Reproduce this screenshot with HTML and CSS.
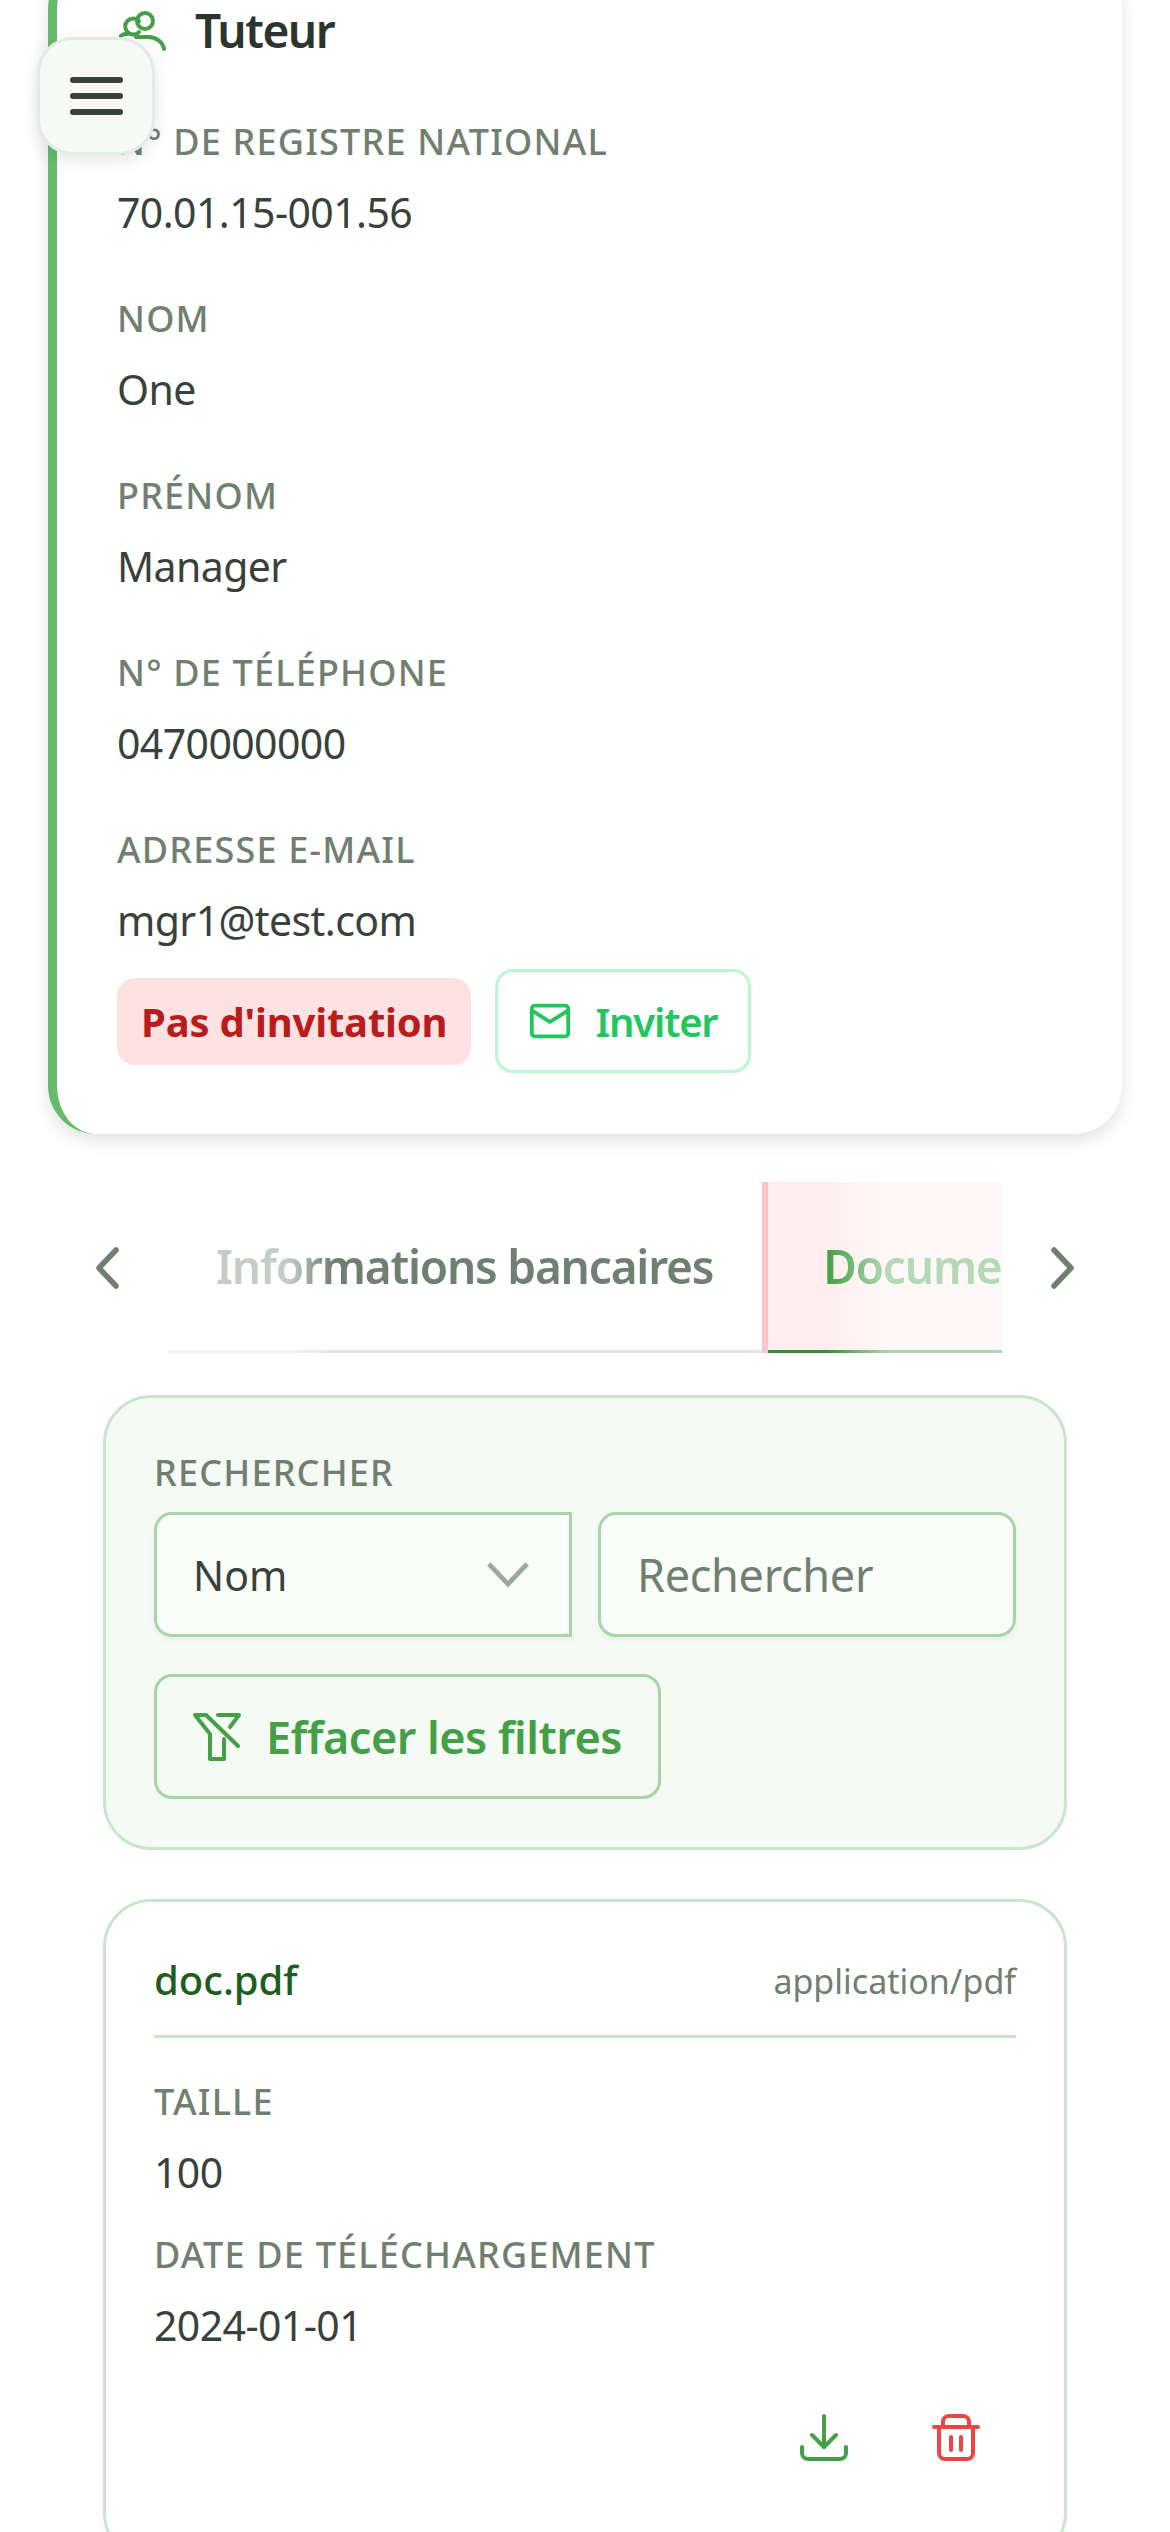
FILE: index.html
```html
<!DOCTYPE html>
<html>

<head>
    <title>Tuteur</title>
    <link rel="stylesheet" href="styles.css">
</head>

<body>
    <button class="menu-btn" aria-label="Menu">
        <span></span>
        <span></span>
        <span></span>
    </button>

    <section class="person-card">
        <div class="person-title">
            <svg class="person-icon" viewBox="0 0 48 48" fill="none" stroke="#43a047" stroke-width="4" stroke-linecap="round">
                <circle cx="26" cy="15" r="8" />
                <path d="M20 15a8 8 0 1 0 0 11" />
                <path d="M17 31h12a16 14 0 0 1 16 12" />
                <path d="M1 31a8 8 0 0 1 7-3" />
            </svg>
            <h2>Tuteur</h2>
        </div>

        <div class="field">
            <div class="label">N° de registre national</div>
            <div class="value">70.01.15-001.56</div>
        </div>
        <div class="field">
            <div class="label">Nom</div>
            <div class="value">One</div>
        </div>
        <div class="field">
            <div class="label">Prénom</div>
            <div class="value">Manager</div>
        </div>
        <div class="field">
            <div class="label">N° de téléphone</div>
            <div class="value">0470000000</div>
        </div>
        <div class="field">
            <div class="label">Adresse e-mail</div>
            <div class="value">mgr1@test.com</div>
        </div>

        <div class="invite-row">
            <span class="badge">Pas d'invitation</span>
            <button class="invite-btn">
                <svg viewBox="0 0 48 48" fill="none" stroke="#22c55e" stroke-width="4" stroke-linejoin="round" stroke-linecap="round">
                    <rect x="5" y="8" width="38" height="32" rx="3" />
                    <path d="M5 13l19 12 19-12" />
                </svg>
                Inviter
            </button>
        </div>
    </section>

    <nav class="tabs-row">
        <svg class="chevron" viewBox="0 0 25 42" fill="none" stroke="#6f8071" stroke-width="5.5" stroke-linecap="round" stroke-linejoin="round">
            <path d="M21 3L4 21l17 18" />
        </svg>
        <div class="tabs">
            <div class="tab">Informations bancaires</div>
            <div class="tab active">Documents</div>
        </div>
        <svg class="chevron" viewBox="0 0 25 42" fill="none" stroke="#6f8071" stroke-width="5.5" stroke-linecap="round" stroke-linejoin="round">
            <path d="M4 3l17 18L4 39" />
        </svg>
    </nav>

    <section class="filter-card">
        <div class="label">Rechercher</div>
        <div class="filter-grid">
            <div class="select">
                <span>Nom</span>
                <svg viewBox="0 0 44 28" fill="none" stroke="#9aa99d" stroke-width="5">
                    <path d="M2 3l20 21L42 3" />
                </svg>
            </div>
            <div class="search">Rechercher</div>
        </div>
        <button class="clear-btn">
            <svg viewBox="0 0 48 48" fill="none" stroke="#43a047" stroke-width="4" stroke-linecap="round" stroke-linejoin="round">
                <path d="M13 2H2l15 19v25h14V26" />
                <path d="M13 2l32 31" />
                <path d="M25 2h21l-9 12" />
            </svg>
            Effacer les filtres
        </button>
    </section>

    <section class="doc-card">
        <div class="doc-head">
            <span class="doc-name">doc.pdf</span>
            <span class="doc-type">application/pdf</span>
        </div>
        <div class="doc-field">
            <div class="label">Taille</div>
            <div class="value">100</div>
        </div>
        <div class="doc-field">
            <div class="label">Date de téléchargement</div>
            <div class="value">2024-01-01</div>
        </div>
        <div class="doc-actions">
            <button class="icon-btn" aria-label="Télécharger">
                <svg viewBox="0 0 48 48" fill="none" stroke="#43a047" stroke-width="4" stroke-linecap="round" stroke-linejoin="round">
                    <path d="M24 2v31" />
                    <path d="M12 21l12 12 12-12" />
                    <path d="M2 33v6a6 6 0 0 0 6 6h32a6 6 0 0 0 6-6v-6" />
                </svg>
            </button>
            <button class="icon-btn" aria-label="Supprimer">
                <svg viewBox="0 0 48 48" fill="none" stroke="#ef4444" stroke-width="4" stroke-linecap="round" stroke-linejoin="round">
                    <path d="M2 13h44" />
                    <path d="M7 13v26a6 6 0 0 0 6 6h22a6 6 0 0 0 6-6V13" />
                    <path d="M11 13V8a6 6 0 0 1 6-6h14a6 6 0 0 1 6 6v5" />
                    <path d="M19 23v13" />
                    <path d="M29 23v13" />
                </svg>
            </button>
        </div>
    </section>
</body>

</html>
```

FILE: styles.css
```css
html,
body {
    margin: 0;
    height: 2532px;
    overflow: hidden;
}

body {
    position: relative;
    background-color: #fff;
    font-family: "Noto Sans", "Open Sans", sans-serif;
    color: #37423b;
}

button {
    font-family: inherit;
    background: none;
    cursor: pointer;
}

/* Floating menu button */
.menu-btn {
    position: absolute;
    top: 37px;
    left: 37px;
    z-index: 5;
    width: 118px;
    height: 118px;
    padding: 0;
    display: flex;
    flex-direction: column;
    align-items: center;
    justify-content: center;
    gap: 10px;
    background-color: #f6f9f6;
    border: 3px solid #e3ebe6;
    border-radius: 36px;
    box-shadow: 0 6px 18px rgba(0, 0, 0, 0.1);
}

.menu-btn span {
    width: 53px;
    height: 6px;
    border-radius: 3px;
    background-color: #37423b;
}

/* Person card */
.person-card {
    margin: -39px 48px 0 48px;
    padding: 0 48px 0 60px;
    height: 1173px;
    box-sizing: border-box;
    background-color: #fff;
    border-left: 9px solid #66bb6a;
    border-radius: 48px;
    box-shadow: 0 6px 18px rgba(0, 0, 0, 0.12);
}

.person-title {
    display: flex;
    align-items: center;
    gap: 28px;
    height: 72px;
    padding-top: 33px;
    margin-bottom: 49px;
}

.person-title h2 {
    margin: 0;
    font-size: 46px;
    font-weight: 600;
    color: #2b352e;
    letter-spacing: -1.5px;
}

.person-icon {
    width: 48px;
    height: 48px;
    margin-left: 2px;
}

.label {
    font-size: 36px;
    line-height: 54px;
    font-weight: 500;
    text-transform: uppercase;
    letter-spacing: 1.2px;
    color: #6f8071;
}

.value {
    margin-top: 12px;
    font-size: 41px;
    line-height: 63px;
    letter-spacing: -0.6px;
    color: #37423b;
}

.field {
    margin-bottom: 48px;
}

.invite-row {
    display: flex;
    align-items: center;
    gap: 24px;
    margin-top: -31px;
}

.badge {
    padding: 0 24px;
    height: 87px;
    display: flex;
    align-items: center;
    font-size: 40px;
    font-weight: 700;
    letter-spacing: -0.2px;
    color: #b91c1c;
    background-color: #fee2e2;
    border-radius: 18px;
}

.invite-btn {
    height: 104px;
    padding: 0 30px 0 29px;
    display: flex;
    align-items: center;
    gap: 22px;
    font-size: 40px;
    font-weight: 600;
    letter-spacing: -1.2px;
    color: #22c55e;
    border: 3px solid #bbf7d0;
    border-radius: 18px;
}

.invite-btn svg {
    width: 46px;
    height: 46px;
}

/* Tabs */
.tabs-row {
    display: flex;
    align-items: center;
    gap: 48px;
    margin-top: 48px;
    padding: 0 95px;
}

.chevron {
    width: 25px;
    height: 42px;
    flex-shrink: 0;
}

.tabs {
    flex: 1;
    min-width: 0;
    display: flex;
    overflow: hidden;
    -webkit-mask-image: linear-gradient(to right, rgba(0, 0, 0, 0.4) 0, rgba(0, 0, 0, 0.4) 120px, #000 165px, #000 calc(100% - 175px), rgba(0, 0, 0, 0.4) calc(100% - 115px), rgba(0, 0, 0, 0.4) 100%);
    mask-image: linear-gradient(to right, rgba(0, 0, 0, 0.4) 0, rgba(0, 0, 0, 0.4) 120px, #000 165px, #000 calc(100% - 175px), rgba(0, 0, 0, 0.4) calc(100% - 115px), rgba(0, 0, 0, 0.4) 100%);
}

.tab {
    flex-shrink: 0;
    height: 171px;
    box-sizing: border-box;
    display: flex;
    align-items: center;
    padding: 0 49px 3px 48px;
    font-size: 46px;
    font-weight: 600;
    letter-spacing: -1.2px;
    color: #6f8071;
    box-shadow: inset 0 -3px 0 #e0e7e4;
}

.tab.active {
    padding-left: 55px;
    color: #43a047;
    background-color: #feeeee;
    border-left: 6px solid #fec5c5;
    box-shadow: inset 0 -3px 0 #388e3c;
}

/* Filters */
.filter-card {
    margin: 42px 103px 0 103px;
    padding: 48px;
    background-color: #f5faf5;
    border: 3px solid #c8e6c9;
    border-radius: 48px;
}

.filter-grid {
    display: grid;
    grid-template-columns: 1fr 1fr;
    gap: 26px;
    margin-top: 12px;
}

.select,
.search {
    height: 125px;
    box-sizing: border-box;
    display: flex;
    align-items: center;
    padding: 0 36px;
    font-size: 41px;
    background-color: #fbfdfb;
    border: 3px solid #a5d6a7;
    border-radius: 18px;
    box-shadow: 0 3px 6px rgba(0, 0, 0, 0.05);
}

.select {
    justify-content: space-between;
    padding-right: 40px;
    border-radius: 18px 0 0 18px;
}

.select svg {
    width: 42px;
    height: 27px;
}

.search {
    font-size: 45px;
    letter-spacing: -0.3px;
    color: #6f8071;
}

.clear-btn {
    margin-top: 37px;
    height: 125px;
    padding: 0 36px;
    display: flex;
    align-items: center;
    gap: 25px;
    font-size: 45px;
    font-weight: 600;
    letter-spacing: -0.5px;
    color: #43a047;
    border: 3px solid #a5d6a7;
    border-radius: 18px;
}

.clear-btn svg {
    width: 48px;
    height: 48px;
}

/* Document card */
.doc-card {
    margin: 49px 103px 0 103px;
    padding: 48px 48px 60px 48px;
    border: 3px solid #c8e6c9;
    border-radius: 48px;
}

.doc-head {
    display: flex;
    align-items: center;
    justify-content: space-between;
    height: 58px;
    padding-bottom: 27px;
    border-bottom: 3px solid #c8e6c9;
    margin-bottom: 37px;
}

.doc-name {
    font-size: 40px;
    font-weight: 500;
    color: #1b5e20;
}

.doc-type {
    margin-top: 3px;
    font-size: 34px;
    color: #6f8071;
}

.doc-field {
    margin-bottom: 24px;
}

.doc-actions {
    display: flex;
    justify-content: flex-end;
    gap: 12px;
    margin-top: -3px;
}

.icon-btn {
    width: 120px;
    height: 120px;
    padding: 36px;
    border: none;
}

.icon-btn svg {
    display: block;
    width: 48px;
    height: 48px;
}
```
